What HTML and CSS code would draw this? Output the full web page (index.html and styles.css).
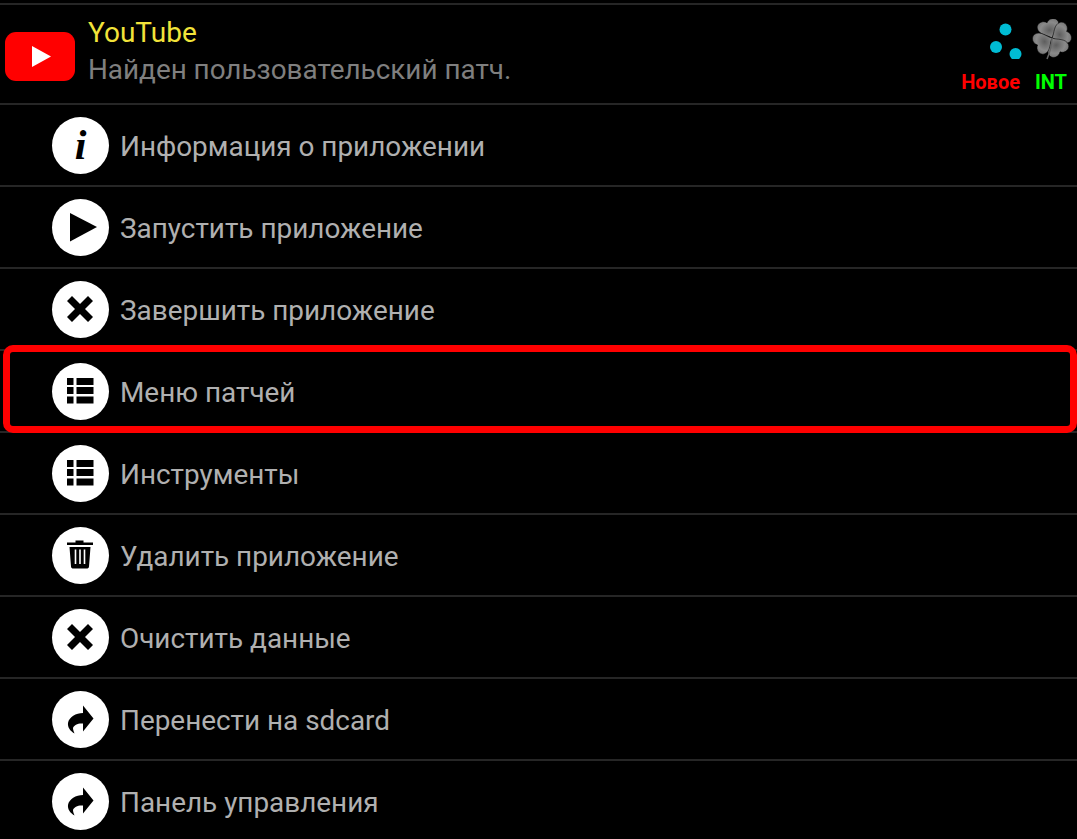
FILE: index.html
```html
<!DOCTYPE html>
<html lang="ru">
<head>
<meta charset="utf-8">
<title>YouTube</title>
<link rel="stylesheet" href="styles.css">
</head>
<body>
<svg class="defs" width="0" height="0" aria-hidden="true">
  <defs>
    <symbol id="i-x" viewBox="0 0 57 57"><path d="M23 28 L15 20 L20 15 L28 23 L36 15 L41 20 L33 28 L41 36 L36 41 L28 33 L20 41 L15 36 Z" fill="#000"/></symbol>
    <symbol id="i-list" viewBox="0 0 57 57"><path d="M15 15h6.500v7h-6.500zM24.500 15h17v7h-17zM15 24h6.500v7h-6.500zM24.500 24h17v7h-17zM15 33.500h6.500v7h-6.500zM24.500 33.500h17v7h-17z" fill="#000"/></symbol>
    <symbol id="i-share" viewBox="0 0 57 57"><path d="M31 14.500 L41.500 27.500 L31 40.500 V32.500 C26 32 22 34 21 37 C21 39 22 41 22.500 42.500 C18 40 15.500 36 16 32 C17 26 24 22 31 22 Z" fill="#000"/></symbol>
    <radialGradient id="leaf" cx="50%" cy="55%" r="60%">
      <stop offset="0" stop-color="#5e5e5e"/>
      <stop offset=".7" stop-color="#8a8a8a"/>
      <stop offset="1" stop-color="#7a7a7a"/>
    </radialGradient>
    <path id="heart" d="M0 0 C-3 -4 -12 -7 -11 -14 C-10 -19 -3 -20 0 -16 C3 -20 10 -19 11 -14 C12 -7 3 -4 0 0 Z" fill="url(#leaf)" stroke="#000" stroke-width=".5"/>
  </defs>
</svg>
<main class="screen">
  <header class="app">
    <svg class="yt" viewBox="0 0 70 49" aria-hidden="true">
      <rect width="70" height="49" rx="11" fill="#f00"/>
      <path d="M27 14 L46 24.500 L27 35 Z" fill="#fff"/>
    </svg>
    <div class="app-text">
      <div class="app-name">YouTube</div>
      <div class="app-status">Найден пользовательский патч.</div>
    </div>
    <div class="badges">
      <div class="badge">
        <svg class="dots" viewBox="0 0 34 40" aria-hidden="true">
          <circle cx="17.500" cy="10.500" r="6" fill="#00bcd4"/>
          <circle cx="8" cy="28" r="6" fill="#00bcd4"/>
          <circle cx="27.500" cy="35" r="6" fill="#00bcd4"/>
        </svg>
        <span class="tag tag-new">Новое</span>
      </div>
      <div class="badge">
        <svg class="clover" viewBox="0 0 40 42" aria-hidden="true">
          <use href="#heart" transform="translate(20 19) rotate(-18)"/>
          <use href="#heart" transform="translate(20 19) rotate(66)"/>
          <use href="#heart" transform="translate(20 19) rotate(150)"/>
          <use href="#heart" transform="translate(20 19) rotate(244)"/>
          <path d="M20 19 C20 27 18 33 15 40" stroke="#666" stroke-width="1.500" fill="none"/>
        </svg>
        <span class="tag tag-int">INT</span>
      </div>
    </div>
  </header>
  <ul class="menu">
    <li class="row"><span class="disc"><span class="info">i</span></span><span class="label">Информация о приложении</span></li>
    <li class="row"><span class="disc"><svg class="ico" viewBox="0 0 57 57" aria-hidden="true"><path d="M18 14 L45 28 L18 42.500 Z" fill="#000"/></svg></span><span class="label">Запустить приложение</span></li>
    <li class="row"><span class="disc"><svg class="ico" aria-hidden="true"><use href="#i-x"/></svg></span><span class="label">Завершить приложение</span></li>
    <li class="row"><span class="disc"><svg class="ico" aria-hidden="true"><use href="#i-list"/></svg></span><span class="label">Меню патчей</span><span class="marker"></span></li>
    <li class="row"><span class="disc"><svg class="ico" aria-hidden="true"><use href="#i-list"/></svg></span><span class="label">Инструменты</span></li>
    <li class="row"><span class="disc"><svg class="ico" viewBox="0 0 57 57" aria-hidden="true"><path d="M23.500 15.500 V13.500 H31.500 V15.500 H41 V18 H15 V15.500 Z M17.500 20 H38.500 L37 39.500 C36.900 41 36 41.500 34.500 41.500 H21.500 C20 41.500 19.100 41 19 39.500 Z" fill="#000"/><path d="M23.500 22.500 V37 M28 22.500 V37 M32.500 22.500 V37" stroke="#fff" stroke-width="1.600"/></svg></span><span class="label">Удалить приложение</span></li>
    <li class="row"><span class="disc"><svg class="ico" aria-hidden="true"><use href="#i-x"/></svg></span><span class="label">Очистить данные</span></li>
    <li class="row"><span class="disc"><svg class="ico" aria-hidden="true"><use href="#i-share"/></svg></span><span class="label">Перенести на sdcard</span></li>
    <li class="row"><span class="disc"><svg class="ico" aria-hidden="true"><use href="#i-share"/></svg></span><span class="label">Панель управления</span></li>
  </ul>
</main>
</body>
</html>
```
FILE: styles.css
```css
html, body {
  margin: 0;
  padding: 0;
  background: #000;
}
body {
  width: 1077px;
  height: 839px;
  overflow: hidden;
  font-family: Roboto, "Liberation Sans", sans-serif;
}
.defs {
  position: absolute;
}
.screen {
  padding-top: 3px;
}
.app {
  display: flex;
  align-items: center;
  height: 98px;
  border-top: 2px solid #262626;
  border-bottom: 2px solid #262626;
  padding-left: 5px;
  padding-right: 10px;
}
.yt {
  width: 70px;
  height: 49px;
  flex: none;
  margin-top: 5px;
}
.app-text {
  flex: 1;
  margin-left: 13px;
  margin-top: -5px;
}
.app-name {
  font-size: 28px;
  line-height: 37px;
  color: #f2e33a;
}
.app-status {
  font-size: 27.85px;
  line-height: 38px;
  color: #7f7f7f;
}
.badges {
  display: flex;
  gap: 12px;
  align-self: flex-start;
  margin-top: 14px;
}
.badge {
  display: flex;
  flex-direction: column;
  align-items: flex-end;
}
.dots {
  width: 34px;
  height: 40px;
  margin-right: -1.5px;
}
.clover {
  width: 40px;
  height: 42px;
  margin-right: -5px;
}
.tag {
  font-size: 20px;
  line-height: 24px;
  font-weight: 700;
  margin-top: 11px;
}
.clover + .tag {
  margin-top: 9px;
}
.tag-new {
  color: #f00;
}
.tag-int {
  color: #0f0;
  margin-left: -3px;
}
.menu {
  list-style: none;
  margin: 0;
  padding: 0;
}
.row {
  position: relative;
  display: flex;
  align-items: center;
  height: 80px;
  padding-left: 52px;
  border-bottom: 2px solid #262626;
}
.disc {
  display: flex;
  align-items: center;
  justify-content: center;
  width: 57px;
  height: 57px;
  flex: none;
  border-radius: 50%;
  background: #fff;
}
.ico {
  width: 57px;
  height: 57px;
  display: block;
}
.info {
  font-family: "Liberation Serif", serif;
  font-style: italic;
  font-weight: 700;
  font-size: 42px;
  line-height: 57px;
  color: #000;
}
.label {
  margin-left: 11px;
  margin-top: 4px;
  font-size: 27.9px;
  line-height: 36px;
  color: #b0b0b0;
}
.marker {
  position: absolute;
  left: 3px;
  right: 0;
  top: -6px;
  bottom: -2px;
  border: 7px solid #f00;
  border-radius: 10px;
  pointer-events: none;
}
```
